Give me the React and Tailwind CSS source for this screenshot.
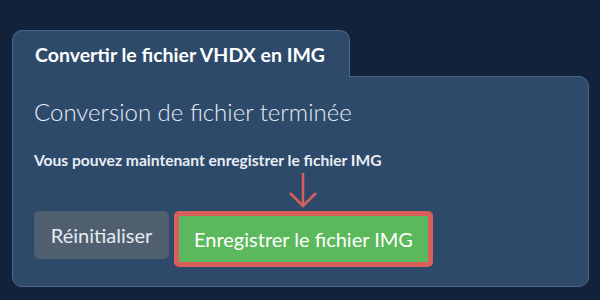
import React from 'react';

const App = () => {
  return (
    <div className="w-[600px] h-[300px] bg-[#11223a] pt-[30px] pl-[12px] font-['Lato','Open_Sans',sans-serif] overflow-hidden">
      {/* Tab header */}
      <div className="relative z-10 -mb-px w-[338px] h-[47px] bg-[#2d4a6b] border border-b-0 border-[#4b6888] rounded-t-[10px] pl-[22px] pt-[13px]">
        <h1 className="text-[19.5px] font-bold text-white leading-[22px]">Convertir le fichier VHDX en IMG</h1>
      </div>

      {/* Panel */}
      <div className="w-[577px] h-[211px] bg-[#2d4a6b] border border-[#4b6888] rounded-b-[10px] rounded-tr-[10px] pl-[21px] pt-[20px]">
        <h2 className="text-[24px] font-light text-[#e8edf3] leading-[30px]">Conversion de fichier terminée</h2>
        <p className="mt-[24px] text-[15.6px] font-bold text-[#e8edf3] leading-[18px]">
          Vous pouvez maintenant enregistrer le fichier IMG
        </p>

        {/* Arrow pointing to the save button */}
        <div className="h-[42px] pl-[253px] pt-[3px]">
          <svg width="32" height="37" viewBox="0 0 32 37" fill="none" stroke="#d9605a" strokeWidth="2.5">
            <line x1="16" y1="1" x2="16" y2="34" />
            <polyline points="3,21 16,34 29,21" />
          </svg>
        </div>

        <div className="flex items-start gap-[5px]">
          <button className="w-[135px] h-[48px] bg-[#4f5f70] rounded-[5px] text-[20px] text-[#e6ebf0]">
            Réinitialiser
          </button>
          <button className="w-[259px] h-[56px] bg-[#5cb85c] border-[5px] border-[#d9605a] rounded-[5px] text-[20px] text-white">
            Enregistrer le fichier IMG
          </button>
        </div>
      </div>
    </div>
  );
};

export default App;
